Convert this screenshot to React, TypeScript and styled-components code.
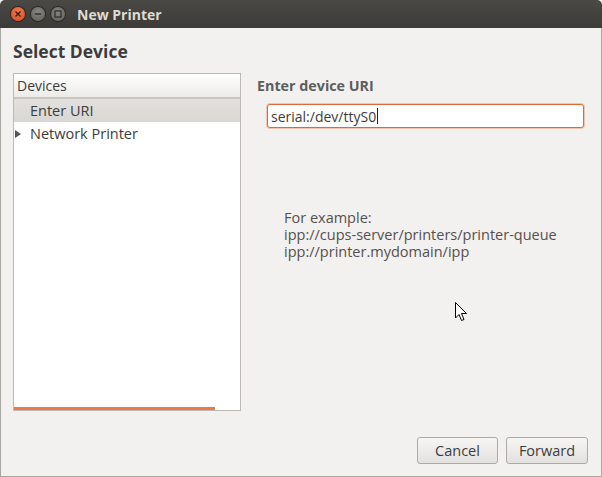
import React from "react";
import styled, { createGlobalStyle } from "styled-components";

const Global = createGlobalStyle`
  html, body { margin: 0; padding: 0; background: #f2f1f0; }
  body { font-family: "Open Sans", "DejaVu Sans", sans-serif; }
`;

const Window = styled.div`
  width: 602px;
  height: 477px;
  display: flex;
  flex-direction: column;
  box-sizing: border-box;
  position: relative;
  overflow: hidden;
`;

const TitleBar = styled.div`
  height: 28px;
  flex: none;
  background: linear-gradient(#4a4944, #3c3b37);
  display: flex;
  align-items: center;
  padding-left: 11px;
  gap: 6px;
  border-radius: 5px 5px 0 0;
`;

const WinButton = styled.div<{ $kind: "close" | "min" | "max" }>`
  width: 14px;
  height: 14px;
  border-radius: 50%;
  display: flex;
  align-items: center;
  justify-content: center;
  background: ${(p) =>
    p.$kind === "close"
      ? "radial-gradient(circle at 50% 35%, #f47c4e, #d9471c)"
      : "radial-gradient(circle at 50% 35%, #86857f, #5e5d59)"};
  box-shadow: 0 0 0 1px #2a2926;
`;

const TitleText = styled.div`
  margin-left: 6px;
  color: #dfdbd2;
  font-weight: 700;
  font-size: 14px;
`;

const Body = styled.div`
  flex: 1;
  display: flex;
  flex-direction: column;
  border-left: 1px solid #a9a7a2;
  border-right: 1px solid #a9a7a2;
  border-bottom: 1px solid #a9a7a2;
  padding: 11px 13px 12px 12px;
  background: #f2f1f0;
  min-height: 0;
`;

const Heading = styled.div`
  font-weight: 700;
  font-size: 17.5px;
  color: #3c3c3c;
  height: 24px;
  line-height: 24px;
  margin-bottom: 10px;
`;

const Main = styled.div`
  display: flex;
  flex: 1;
  min-height: 0;
`;

const TreePanel = styled.div`
  width: 228px;
  height: 338px;
  border: 1px solid #bdbab5;
  background: #fff;
  display: flex;
  flex-direction: column;
  position: relative;
  box-sizing: border-box;
`;

const TreeHeader = styled.div`
  height: 25px;
  box-sizing: border-box;
  background: linear-gradient(#ffffff, #ecebe8);
  border-bottom: 2px solid #c9c6c1;
  padding-left: 3px;
  font-size: 14px;
  color: #3c3c3c;
  display: flex;
  align-items: center;
`;

const Row = styled.div<{ $selected?: boolean }>`
  height: 23px;
  display: flex;
  align-items: center;
  padding-left: 0;
  font-size: 14.5px;
  color: #3c3c3c;
  background: ${(p) => (p.$selected ? "linear-gradient(#e3e1de, #d9d7d3)" : "transparent")};
`;

const Expander = styled.span`
  width: 15px;
  padding-left: 1px;
  display: inline-flex;
  align-items: center;
  color: #555;
`;

const ProgressBar = styled.div`
  position: absolute;
  left: 0;
  bottom: 0;
  height: 3px;
  width: 201px;
  background: #f07746;
`;

const RightPane = styled.div`
  flex: 1;
  padding-left: 16px;
  display: flex;
  flex-direction: column;
`;

const SectionLabel = styled.div`
  font-weight: 700;
  font-size: 14.3px;
  color: #5d5d5d;
  margin-top: 3px;
  height: 20px;
  line-height: 20px;
`;

const UriInput = styled.div`
  margin: 8px 0 0 10px;
  width: 317px;
  height: 24px;
  box-sizing: border-box;
  border: 1px solid #e0693a;
  border-radius: 3px;
  background: #fff;
  box-shadow: 0 0 0 1px rgba(240, 119, 70, 0.35);
  display: flex;
  align-items: center;
  padding-left: 3px;
  font-size: 14px;
  color: #3c3c3c;
`;

const Caret = styled.span`
  display: inline-block;
  width: 1px;
  height: 16px;
  background: #222;
  margin-left: 1px;
`;

const Example = styled.div`
  margin: 81px 0 0 27px;
  font-size: 14.5px;
  line-height: 17px;
  color: #574f4c;
`;

const Footer = styled.div`
  display: flex;
  justify-content: flex-end;
  gap: 8px;
  margin-top: auto;
`;

const Button = styled.div<{ $width: number }>`
  width: ${(p) => p.$width}px;
  height: 27px;
  box-sizing: border-box;
  border: 1px solid #aeaba6;
  border-radius: 3px;
  background: linear-gradient(#f7f6f5, #e3e1de);
  display: flex;
  align-items: center;
  justify-content: center;
  font-size: 14.5px;
  color: #3c3c3c;
  margin-top: -1px;
`;

const Pointer = styled.svg`
  position: absolute;
  left: 455px;
  top: 302px;
`;

export default function App() {
  return (
    <>
      <Global />
      <Window>
        <TitleBar>
          <WinButton $kind="close">
            <svg width="8" height="8" viewBox="0 0 8 8">
              <path d="M1.5 1.5L6.5 6.5M6.5 1.5L1.5 6.5" stroke="#3a1a10" strokeWidth="1.4" />
            </svg>
          </WinButton>
          <WinButton $kind="min">
            <svg width="8" height="8" viewBox="0 0 8 8">
              <path d="M1 4H7" stroke="#2e2d2a" strokeWidth="1.4" />
            </svg>
          </WinButton>
          <WinButton $kind="max">
            <svg width="8" height="8" viewBox="0 0 8 8">
              <rect x="1" y="1" width="6" height="6" fill="none" stroke="#2e2d2a" strokeWidth="1.2" />
            </svg>
          </WinButton>
          <TitleText>New Printer</TitleText>
        </TitleBar>
        <Body>
          <Heading>Select Device</Heading>
          <Main>
            <TreePanel>
              <TreeHeader>Devices</TreeHeader>
              <Row $selected>
                <Expander />
                Enter URI
              </Row>
              <Row>
                <Expander>
                  <svg width="6" height="8" viewBox="0 0 6 8">
                    <path d="M0 0L6 4L0 8Z" fill="#555" />
                  </svg>
                </Expander>
                Network Printer
              </Row>
              <ProgressBar />
            </TreePanel>
            <RightPane>
              <SectionLabel>Enter device URI</SectionLabel>
              <UriInput>
                serial:/dev/ttyS0
                <Caret />
              </UriInput>
              <Example>
                For example:
                <br />
                ipp://cups-server/printers/printer-queue
                <br />
                ipp://printer.mydomain/ipp
              </Example>
            </RightPane>
          </Main>
          <Footer>
            <Button $width={81}>Cancel</Button>
            <Button $width={82}>Forward</Button>
          </Footer>
        </Body>
        <Pointer width="12" height="20" viewBox="0 0 12 20">
          <path d="M0.5 0.5V16L4 12.5L6.5 18.5L9 17.5L6.5 11.5H11.5Z" fill="#fff" stroke="#000" strokeWidth="1" />
        </Pointer>
      </Window>
    </>
  );
}
